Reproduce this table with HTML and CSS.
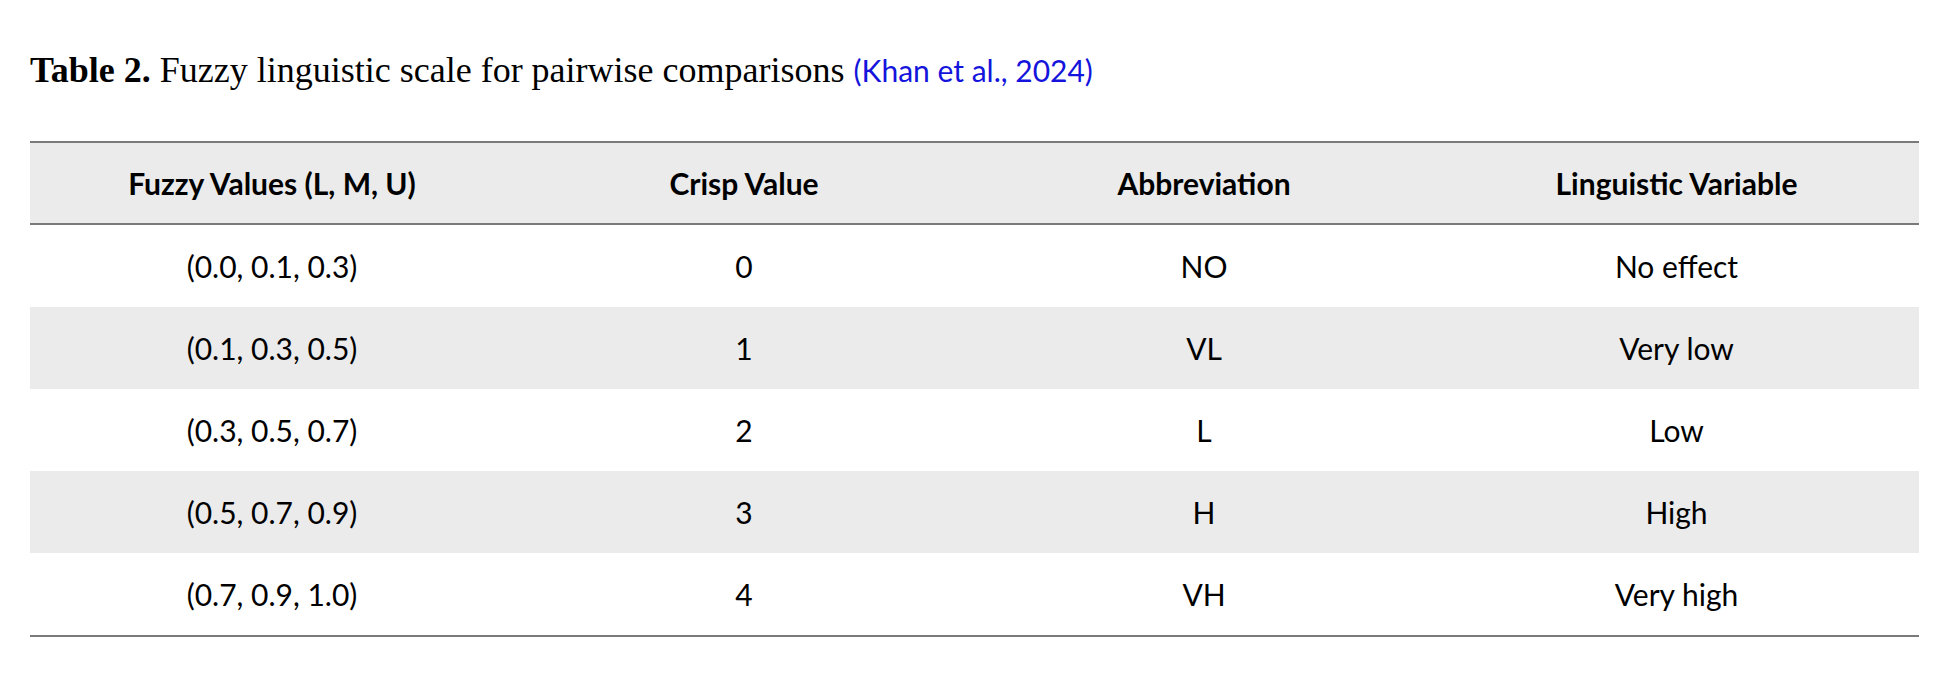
FILE: index.html
```html
<!DOCTYPE html>
<html>
<head>
<meta charset="utf-8">
<link rel="stylesheet" href="styles.css">
</head>
<body>
<div class="page">
  <p class="caption"><b class="label">Table 2.</b> Fuzzy linguistic scale for pairwise comparisons <span class="cite">(Khan et al., 2024)</span></p>
  <table class="scale">
    <colgroup>
      <col class="c1"><col class="c2"><col class="c3"><col class="c4">
    </colgroup>
    <thead>
      <tr><th>Fuzzy Values (L, M, U)</th><th>Crisp Value</th><th>Abbreviation</th><th>Linguistic Variable</th></tr>
    </thead>
    <tbody>
      <tr><td>(0.0, 0.1, 0.3)</td><td>0</td><td>NO</td><td>No effect</td></tr>
      <tr class="alt"><td>(0.1, 0.3, 0.5)</td><td>1</td><td>VL</td><td>Very low</td></tr>
      <tr><td>(0.3, 0.5, 0.7)</td><td>2</td><td>L</td><td>Low</td></tr>
      <tr class="alt"><td>(0.5, 0.7, 0.9)</td><td>3</td><td>H</td><td>High</td></tr>
      <tr><td>(0.7, 0.9, 1.0)</td><td>4</td><td>VH</td><td>Very high</td></tr>
    </tbody>
  </table>
</div>
</body>
</html>
```

FILE: styles.css
```css
html, body {
  margin: 0;
  padding: 0;
  background: #ffffff;
}

.page {
  padding: 0 21px 0 30px;
}

.caption {
  margin: 0;
  padding-top: 50px;
  height: 141px;
  box-sizing: border-box;
  font-family: "Liberation Serif", "Times New Roman", serif;
  font-size: 36px;
  line-height: 40px;
  color: #000;
  white-space: nowrap;
}

.label {
  font-weight: bold;
}

.cite {
  font-family: Lato, "Open Sans", sans-serif;
  font-size: 30px;
  color: #1414dc;
}

.scale {
  width: 1889px;
  border-collapse: collapse;
  table-layout: fixed;
  font-family: Lato, "Open Sans", sans-serif;
  font-size: 30px;
  color: #000;
  border-top: 2px solid #7a7a7a;
  border-bottom: 2px solid #7a7a7a;
}

.c1 { width: 484px; }
.c2 { width: 460px; }
.c3 { width: 460px; }
.c4 { width: 485px; }

.scale th {
  background: #ebebeb;
  font-weight: bold;
  height: 80px;
  padding: 0;
  text-align: center;
  border-bottom: 2px solid #7a7a7a;
}

.scale td {
  height: 82px;
  padding: 0;
  text-align: center;
}

.scale tr.alt td {
  background: #ebebeb;
}
```
